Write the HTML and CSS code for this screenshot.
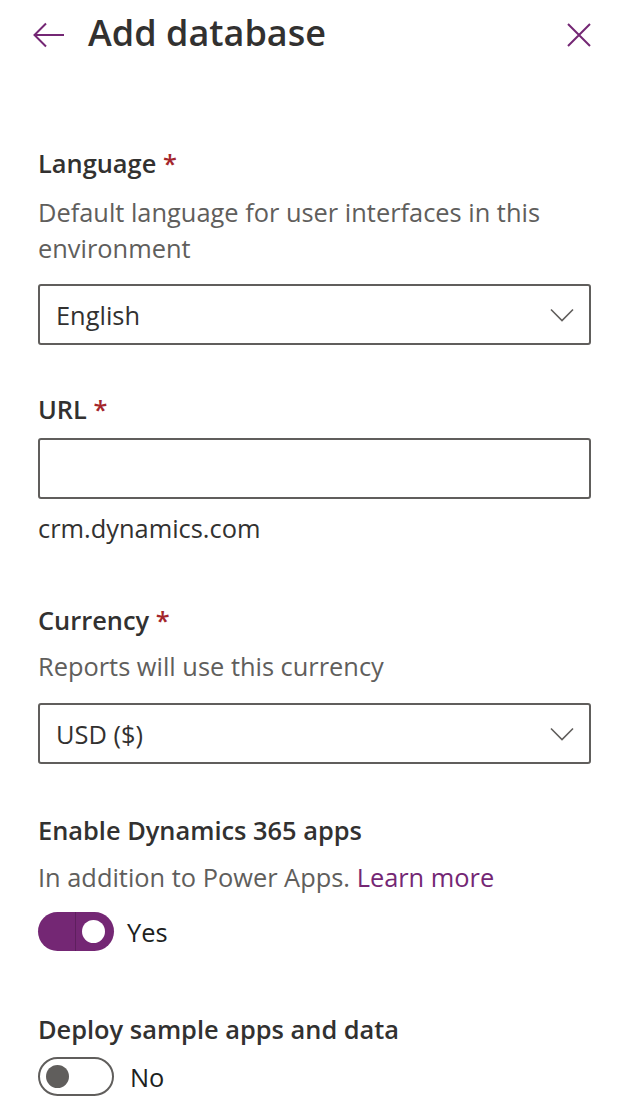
FILE: index.html
```html
<!DOCTYPE html>
<html lang="en">
<head>
<meta charset="utf-8">
<title>Add database</title>
<link rel="stylesheet" href="styles.css">
</head>
<body>
<div class="panel">
  <header class="header">
    <button class="icon-btn back" aria-label="Back">
      <svg width="32" height="26" viewBox="0 0 32 26"><path d="M31 13H2M13 1.5L1.5 13L13 24.5" fill="none" stroke="#742774" stroke-width="2"/></svg>
    </button>
    <h1 class="title">Add database</h1>
    <button class="icon-btn close" aria-label="Close">
      <svg width="24" height="24" viewBox="0 0 24 24"><path d="M1 1L23 23M23 1L1 23" fill="none" stroke="#742774" stroke-width="2"/></svg>
    </button>
  </header>

  <section class="field f-language">
    <div class="label">Language <span class="req">*</span></div>
    <div class="desc">Default language for user interfaces in this environment</div>
    <div class="dropdown">
      <span>English</span>
      <svg class="chev" width="24" height="14" viewBox="0 0 24 14"><path d="M1 1.5L12 12.5L23 1.5" fill="none" stroke="#605e5c" stroke-width="1.6"/></svg>
    </div>
  </section>

  <section class="field f-url">
    <div class="label">URL <span class="req">*</span></div>
    <div class="textbox"></div>
    <div class="suffix">crm.dynamics.com</div>
  </section>

  <section class="field f-currency">
    <div class="label">Currency <span class="req">*</span></div>
    <div class="desc">Reports will use this currency</div>
    <div class="dropdown">
      <span>USD ($)</span>
      <svg class="chev" width="24" height="14" viewBox="0 0 24 14"><path d="M1 1.5L12 12.5L23 1.5" fill="none" stroke="#605e5c" stroke-width="1.6"/></svg>
    </div>
  </section>

  <section class="field f-dynamics">
    <div class="label">Enable Dynamics 365 apps</div>
    <div class="desc">In addition to Power Apps. <a href="#" class="link">Learn more</a></div>
    <div class="toggle-row">
      <span class="toggle on"><span class="knob"></span></span>
      <span class="toggle-text">Yes</span>
    </div>
  </section>

  <section class="field f-sample">
    <div class="label">Deploy sample apps and data</div>
    <div class="toggle-row">
      <span class="toggle off"><span class="knob"></span></span>
      <span class="toggle-text no">No</span>
    </div>
  </section>
</div>
</body>
</html>
```

FILE: styles.css
```css
* { box-sizing: border-box; }
html, body {
  margin: 0;
  padding: 0;
  background: #ffffff;
}
body {
  font-family: "Open Sans", "Noto Sans", "Liberation Sans", sans-serif;
  color: #323130;
  font-size: 25.4px;
  line-height: 36px;
}
.panel {
  padding: 0 35px 0 38px;
}
.header {
  display: flex;
  align-items: center;
  height: 70px;
  margin-left: -5px;
}
.icon-btn {
  background: none;
  border: 0;
  padding: 0;
  display: flex;
  align-items: center;
  cursor: pointer;
}
.back { margin-right: 23px; }
.close { margin-left: auto; }
.title {
  margin: 0 0 5px;
  font-size: 36px;
  font-weight: 600;
  line-height: 44px;
  color: #323130;
}
.label {
  font-weight: 600;
  color: #323130;
}
.req { color: #a4262c; }
.desc { color: #605e5c; }
.link { color: #742774; text-decoration: none; }

.f-language { margin-top: 75px; }
.f-language .desc { margin-top: 13px; }
.dropdown, .textbox {
  height: 61px;
  border: 2px solid #605e5c;
  border-radius: 3px;
  display: flex;
  align-items: center;
  justify-content: space-between;
  padding: 0 15px 0 16px;
}
.f-language .dropdown { margin-top: 18px; }
.f-url { margin-top: 46px; }
.f-url .textbox { margin-top: 11px; }
.suffix { margin-top: 11px; }
.f-currency { margin-top: 56px; }
.f-currency .desc { margin-top: 10px; }
.f-currency .dropdown { margin-top: 19px; }
.f-dynamics { margin-top: 48px; }
.f-dynamics .desc { margin-top: 11px; }
.toggle-row {
  display: flex;
  align-items: center;
  gap: 13px;
}
.f-dynamics .toggle-row { margin-top: 17px; }
.toggle {
  position: relative;
  width: 76px;
  height: 39px;
  border-radius: 20px;
  display: inline-block;
}
.toggle.on { background: #742774; }
.toggle.on::before {
  content: "";
  position: absolute;
  left: 37px;
  top: 0;
  bottom: 0;
  width: 1px;
  background: #5e1f5e;
}
.toggle.on .knob {
  position: absolute;
  right: 9px;
  top: 8px;
  width: 23px;
  height: 23px;
  border-radius: 50%;
  background: #ffffff;
}
.toggle.off {
  border: 2px solid #605e5c;
  background: #ffffff;
}
.toggle.off .knob {
  position: absolute;
  left: 6px;
  top: 6px;
  width: 23px;
  height: 23px;
  border-radius: 50%;
  background: #605e5c;
}
.toggle-text { color: #201f1e; }
.toggle-text.no { margin-left: 3px; }
.f-sample { margin-top: 60px; }
.f-sample .toggle-row { margin-top: 10px; }
```
